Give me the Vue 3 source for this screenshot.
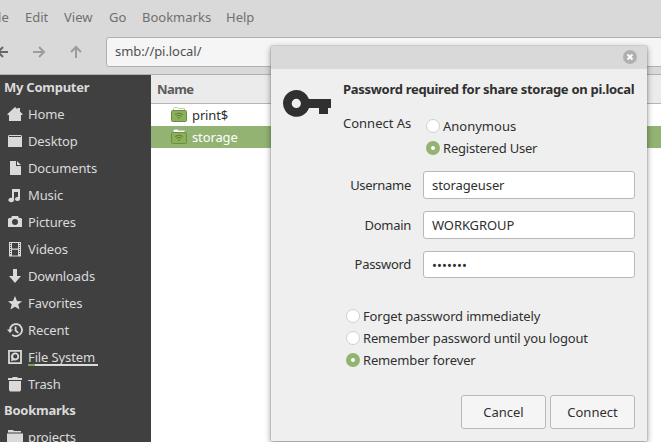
<script setup>
const menus = ['File', 'Edit', 'View', 'Go', 'Bookmarks', 'Help']
const places = [
  { name: 'Home', icon: 'M8 1 L10.5 3.2 V2 H13 V5.4 L15.5 8 V9 H14 V15 H2 V9 H.5 V8 Z' },
  { name: 'Desktop', icon: 'M2 2 H14 L15 3 V14 H1 V3 Z M2 3 V4 H14 V3 Z' },
  { name: 'Documents', icon: 'M3 1 H9 V6 H14 V15 H3 Z M10 1 L14 5 H10 Z' },
  { name: 'Music', icon: 'M5 2 H13 V12 A2.5 2 0 1 1 11 10 V5 H7 V13 A2.8 2.2 0 1 1 5 10.9 Z' },
  { name: 'Pictures', icon: 'M5 2 H11 L12 4 H14 L15 5 V13 H1 V5 L2 4 H4 Z M8 5 A3 3 0 1 0 8 11 A3 3 0 1 0 8 5 Z' },
  { name: 'Videos', icon: 'M2 1 H14 V15.5 H2 Z M5 2 V7.5 H11 V2 Z M5 8.7 V14.5 H11 V8.7 Z M3 2 V3 H4 V2 Z M3 4 V5 H4 V4 Z M3 6 V7 H4 V6 Z M3 8 V9 H4 V8 Z M3 10 V11 H4 V10 Z M3 12 V13 H4 V12 Z M12 2 V3 H13 V2 Z M12 4 V5 H13 V4 Z M12 6 V7 H13 V6 Z M12 8 V9 H13 V8 Z M12 10 V11 H13 V10 Z M12 12 V13 H13 V12 Z' },
  { name: 'Downloads', icon: 'M6 1 H10 V8 H14 L8 15 L2 8 H6 Z' },
  { name: 'Favorites', icon: 'M8 1 L10 6 L15 6.3 L11.2 9.5 L12.6 14.5 L8 11.8 L3.4 14.5 L4.8 9.5 L1 6.3 L6 6 Z' },
  { name: 'Recent', line: 'M3 8 A6 6 0 1 1 5.2 12.7 M8.6 4.5 V8.5 L11.2 10.8', icon: 'M0 7.5 H6 L3 11 Z' },
  { name: 'File System', line: 'M2 1.9 H14 V14.1 H2 Z', icon: 'M8 3.5 A4 4 0 1 1 7 11.3 L4.2 12.2 L4.4 9.4 A4 4 0 0 1 8 3.5 Z M8.3 5.3 A2.1 2.1 0 1 0 8.3 9.5 A2.1 2.1 0 1 0 8.3 5.3 Z', usage: true },
  { name: 'Trash', icon: 'M1 2 H5 L6 1 H10 L11 2 H15 V4 H1 Z M2 5 H14 V14 L13 15.5 H3 L2 14 Z' },
]
const shares = [
  { name: 'print$', selected: false },
  { name: 'storage', selected: true },
]
const fields = [
  { label: 'Username', value: 'storageuser' },
  { label: 'Domain', value: 'WORKGROUP' },
  { label: 'Password', value: '•••••••', secret: true },
]
const remember = [
  { text: 'Forget password immediately', on: false },
  { text: 'Remember password until you logout', on: false },
  { text: 'Remember forever', on: true },
]
</script>

<template>
  <div class="window">
    <nav class="menubar">
      <span v-for="m in menus" :key="m" :class="m.toLowerCase()">{{ m }}</span>
    </nav>
    <div class="toolbar">
      <svg class="arrows" width="106" height="30" viewBox="0 0 106 30" fill="none" stroke-width="2">
        <path d="M8 15 H-3 M3 10 L-2 15 L3 20" stroke="#666" />
        <path d="M33 15 H44 M39 10 L44 15 L39 20" stroke="#9c9c9c" />
        <path d="M76 21 V10 M71 15 L76 10 L81 15" stroke="#9c9c9c" />
      </svg>
      <div class="address">smb://pi.local/</div>
    </div>
    <div class="body">
      <aside class="sidebar">
        <h3>My Computer</h3>
        <div v-for="p in places" :key="p.name" class="place">
          <svg width="16" height="16" viewBox="0 0 16 16">
            <path v-if="p.line" :d="p.line" fill="none" stroke="#dadada" stroke-width="1.8" />
            <path :d="p.icon" fill="#dadada" fill-rule="evenodd" />
          </svg>
          <span :class="['label', { usage: p.usage }]">{{ p.name }}</span>
        </div>
        <h3 class="bookmarks-title">Bookmarks</h3>
        <div class="place">
          <svg width="16" height="16" viewBox="0 0 16 16">
            <path d="M1 1 H6 L7 2 H14 V3.5 H1 Z M0 4.5 H16 V15 H0 Z" fill="#dadada" />
          </svg>
          <span class="label">projects</span>
        </div>
      </aside>
      <main class="listing">
        <div class="column-head">Name</div>
        <div v-for="s in shares" :key="s.name" :class="['share', { selected: s.selected }]">
          <svg width="16" height="16" viewBox="0 0 16 16" fill="none">
            <path d="M2.5 4 V1.5 L3.5 .5 H6.5 L7.5 1.5 H13.5 V4" fill="#fff" stroke="#c5c8bf" />
            <rect x=".5" y="3.5" width="15" height="11" rx="1" fill="#8bb158" stroke="#6c8d46" />
            <path d="M4 7.5 Q8 4.5 12 7.5 M5.5 9.2 Q8 7.3 10.5 9.2" stroke="#5d7b3b" />
            <path d="M6.5 10.5 H9.5 L8 12 Z" fill="#5d7b3b" />
          </svg>
          <span>{{ s.name }}</span>
        </div>
      </main>
    </div>

    <section class="dialog">
      <header class="titlebar">
        <svg width="14" height="14" viewBox="0 0 14 14">
          <circle cx="7" cy="7" r="7" fill="#b0b0b0" />
          <path d="M4.5 4.5 L9.5 9.5 M9.5 4.5 L4.5 9.5" stroke="#fff" stroke-width="1.8" />
        </svg>
      </header>
      <div class="content">
        <svg class="key" width="48" height="27" viewBox="0 0 48 27">
          <path d="M13.3 0 A13.4 13.4 0 0 1 26 9 H48 V18 H45 V24 H36 V18 H26 A13.4 13.4 0 1 1 13.3 0 Z M13.3 8.8 A4.6 4.6 0 1 0 13.3 18 A4.6 4.6 0 1 0 13.3 8.8 Z" fill="#303030" fill-rule="evenodd" />
        </svg>
        <div class="form">
          <h2>Password required for share storage on pi.local</h2>
          <div class="connect">
            <span class="connect-label">Connect As</span>
            <div>
              <div class="option"><i class="radio"></i><span>Anonymous</span></div>
              <div class="option"><i class="radio on"></i><span class="registered">Registered User</span></div>
            </div>
          </div>
          <div class="fields">
            <div v-for="f in fields" :key="f.label" :class="['field', { secret: f.secret }]">
              <span class="field-label">{{ f.label }}</span>
              <div class="entry">{{ f.value }}</div>
            </div>
          </div>
          <div class="remember">
            <div v-for="r in remember" :key="r.text" class="option"><i :class="['radio', { on: r.on }]"></i><span>{{ r.text }}</span></div>
          </div>
        </div>
      </div>
      <footer class="actions">
        <div class="button">Cancel</div>
        <div class="button">Connect</div>
      </footer>
    </section>
  </div>
</template>

<style>
body { overflow: hidden; }
</style>

<style scoped>
* { box-sizing: border-box; }
.window { position: relative; width: 661px; height: 442px; overflow: hidden; background: #d9d9d9; font: 13px "Noto Sans", sans-serif; color: #303030; white-space: nowrap; }
.menubar { display: grid; grid-template-columns: 37px 39px 45px 33px 84px 60px; margin-left: -12px; height: 37px; line-height: 34px; color: #707070; }
.toolbar { display: flex; height: 37px; }
.arrows { flex: none; }
.address { flex: none; width: 580px; height: 30px; border: 1px solid #b0b0b0; border-radius: 3px; background: #f5f5f5; padding-left: 8px; line-height: 27px; letter-spacing: -.06px; color: #505050; }
.body { display: flex; height: 368px; border-top: 1px solid #b0b0b0; }
.sidebar { width: 151px; background: #404040; color: #dadada; overflow: hidden; flex: none; }
h3 { margin: 0; padding-left: 4px; height: 25px; line-height: 25px; font-size: 13px; font-weight: 700; letter-spacing: -.25px; }
h3.bookmarks-title { height: 26px; line-height: 27px; }
.place { display: flex; align-items: center; gap: 5px; height: 27px; padding-left: 7px; letter-spacing: -.12px; }
.place .label { line-height: 20px; height: 20px; }
.usage { position: relative; }
.usage::after { content: ""; position: absolute; left: 0; top: 17px; width: 70px; height: 2px; background: linear-gradient(90deg, #7fa650 7px, #dadada 7px); }
.listing { flex: 1; background: #fff; }
.column-head { height: 29px; line-height: 29px; padding-left: 6px; background: #ebebeb; border-bottom: 1px solid #b5b5b5; font-weight: 700; letter-spacing: -.6px; color: #5c5c5c; }
.share { display: flex; align-items: center; gap: 5px; height: 22px; padding-left: 20px; letter-spacing: -.12px; }
.share.selected { background: #92b372; color: #fff; }
.dialog { position: absolute; left: 271px; top: 46px; width: 376px; height: 395px; background: #efefef; box-shadow: 0 0 1px #777, 0 2px 6px rgba(0, 0, 0, .45); }
.titlebar { display: flex; justify-content: flex-end; height: 23px; padding: 4px 10px 0 0; background: #d9d9d9; }
.content { display: flex; padding: 11px 12px 0; height: 326px; }
.key { flex: none; margin-top: 10px; }
.form { margin-left: 12px; width: 292px; }
h2 { margin: 0; font-size: 13px; line-height: 18px; font-weight: 700; letter-spacing: -.29px; }
.connect { display: flex; margin-top: 17px; }
.connect-label { width: 83px; line-height: 17px; }
.option { display: flex; align-items: center; gap: 3px; height: 22px; }
.registered { letter-spacing: -.2px; }
.radio { width: 14px; height: 14px; border-radius: 50%; border: 1px solid #d0d0d0; background: #fff; flex: none; }
.radio.on { border: 5px solid #92b372; }
.fields { margin-top: 12px; display: grid; gap: 12px; }
.field { display: grid; grid-template-columns: 68px 212px; gap: 12px; line-height: 28px; text-align: right; }
.field-label { letter-spacing: -.3px; }
.entry { height: 28px; line-height: 26px; border: 1px solid #b8b8b8; border-radius: 3px; background: #fff; padding-left: 8px; text-align: left; letter-spacing: -.1px; }
.field.secret { height: 28px; line-height: 26px; }
.secret .entry { height: 27px; letter-spacing: .1px; }
.remember { margin: 26px 0 0 3px; letter-spacing: -.15px; }
.actions { display: flex; justify-content: flex-end; gap: 4px; padding-right: 12px; }
.button { width: 85px; height: 34px; line-height: 32px; border: 1px solid #b8b8b8; border-radius: 3px; background: #f5f5f5; text-align: center; }
</style>
